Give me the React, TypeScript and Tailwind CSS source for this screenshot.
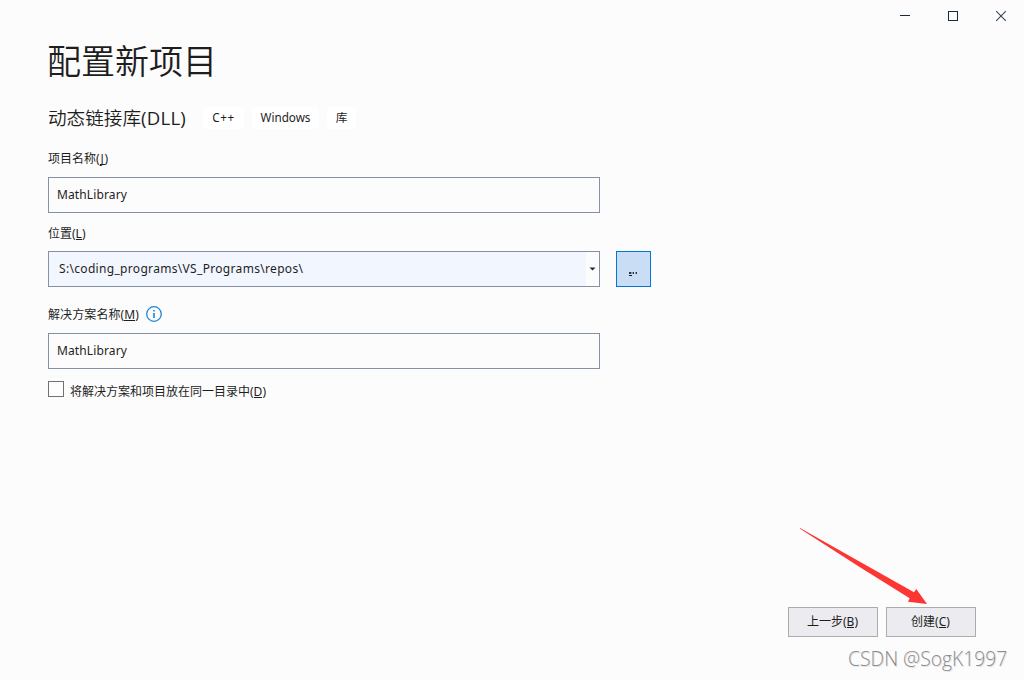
import type { ReactNode } from "react";

function Key({ children }: { children: ReactNode }) {
  return <span className="inline-block h-[13px] border-b border-[#1e1e1e] leading-[13px]">{children}</span>;
}

function Tag({ children, size }: { children: ReactNode; size: string }) {
  return (
    <span className={`flex h-[22px] items-center justify-center rounded-[4px] bg-white text-[11.7px] ${size}`}>
      {children}
    </span>
  );
}

function TitleBar() {
  return (
    <header className="flex h-8 shrink-0 justify-end">
      <div className="flex w-12 items-center justify-center pl-0.5">
        <svg width="12" height="12" viewBox="0 0 12 12" shapeRendering="crispEdges">
          <path d="M1 5h10v1H1z" fill="#1b293e" />
        </svg>
      </div>
      <div className="flex w-12 items-center justify-center pl-0.5">
        <svg width="12" height="12" viewBox="0 0 12 12" shapeRendering="crispEdges">
          <path d="M1.5 1.5h9v9h-9z" fill="none" stroke="#1b293e" />
        </svg>
      </div>
      <div className="flex w-12 items-center justify-center pl-0.5">
        <svg width="12" height="12" viewBox="0 0 12 12">
          <path d="M1.2 1.2l9.6 9.6M10.8 1.2l-9.6 9.6" stroke="#35415a" strokeWidth="1.05" />
        </svg>
      </div>
    </header>
  );
}

export default function App() {
  return (
    <div className="relative flex h-[680px] w-[1024px] flex-col overflow-hidden bg-[#fcfcfc] font-['Noto_Sans','Noto_Sans_CJK_SC',sans-serif] text-[12px] text-[#1e1e1e]">
      <TitleBar />
      <main className="flex flex-1 flex-col pl-12">
        <h1 className="-ml-px -mt-px h-[61px] text-[34px] font-[350] leading-[60px]">配置新项目</h1>
        <div className="mt-[15px] flex h-[22px] items-center">
          <h2 className="w-[155px] whitespace-nowrap text-[18.6px] font-[350] leading-[22px]">
            动态链接库<span className="font-['Open_Sans'] font-normal tracking-[0.25px]">(DLL)</span>
          </h2>
          <div className="flex gap-2">
            <Tag size="w-[41px] tracking-[0.6px]">C++</Tag>
            <Tag size="w-[67px]">Windows</Tag>
            <Tag size="w-[29px]">库</Tag>
          </div>
        </div>

        <label className="mt-[21px] h-[18px] leading-[18px]">项目名称(<span className="inline-block h-[13px] w-[5px] border-b border-[#1e1e1e] text-center font-['Open_Sans'] leading-[13px]">J</span>)</label>
        <div className="mt-[9px] flex h-9 w-[552px] items-center border border-[#8591a5] pl-2 tracking-[0.12px]">MathLibrary</div>

        <label className="mt-[12px] h-[18px] leading-[18px]">位置(<Key>L</Key>)</label>
        <div className="mt-[8px] flex gap-4">
          <div className="flex h-9 w-[552px] border border-[#8591a5]">
            <div className="flex flex-1 items-center bg-[#f2f6ff] pl-[10px] tracking-[0.32px]">S:\coding_programs\VS_Programs\repos\</div>
            <div className="flex w-[13px] items-center justify-center">
              <svg width="7" height="4" viewBox="0 0 7 4">
                <path d="M.5.5h6l-3 3z" fill="#1b293e" />
              </svg>
            </div>
          </div>
          <button className="flex h-9 w-[35px] items-center justify-center border border-[#0078d4] bg-[#c9def5]">
            <svg width="9" height="4" viewBox="0 0 9 4" shapeRendering="crispEdges" className="mt-[9px]">
              <path d="M0 0h2v2H0zM4 0h1v2H4zM7 0h1v2H7z" fill="#2e3340" />
              <path d="M2 0h1v2H2zM3 0h1v2H3zM6 0h1v2H6z" fill="#8c97b0" />
              <path d="M0 3h3v1H0z" fill="#1e1e1e" />
            </svg>
          </button>
        </div>

        <div className="mt-[19px] flex h-[18px] items-center">
          <label className="w-[98px] leading-[18px] tracking-[0.1px]">解决方案名称(<Key>M</Key>)</label>
          <svg width="16" height="16" viewBox="0 0 16 16" className="-mt-0.5">
            <circle cx="8" cy="8" r="7.3" fill="none" stroke="#1c86d8" strokeWidth="1.3" />
            <path d="M7.2 4.1h1.6v1.5H7.2zM7.2 7h1.6v5H7.2z" fill="#1c86d8" />
          </svg>
        </div>
        <div className="mt-[9px] flex h-9 w-[552px] items-center border border-[#8591a5] pl-2 tracking-[0.12px]">MathLibrary</div>

        <div className="mt-[12px] flex">
          <span className="h-4 w-4 border border-[#717171] bg-[#fdfdfd]" />
          <label className="ml-[6px] mt-[2px] h-[18px] leading-[18px]">将解决方案和项目放在同一目录中(<Key>D</Key>)</label>
        </div>
      </main>

      <footer className="mb-[43px] flex shrink-0 justify-end gap-2 pr-12">
        <button className="h-[30px] w-[90px] border border-[#acacac] bg-[#ececf0] pr-px">上一步(<Key>B</Key>)</button>
        <button className="h-[30px] w-[90px] border border-[#acacac] bg-[#ececf0] pr-px">创建(<Key>C</Key>)</button>
      </footer>

      <svg className="absolute left-[796px] top-[524px]" width="136" height="84" viewBox="0 0 136 84">
        <path d="M4 3.9L118 68.3l2.3-3.3L131 80l-19-2.3 1.7-3.5L64 43.3 4 4.8z" fill="#fd3634" />
      </svg>
      <div className="absolute left-[848px] top-[645px] origin-left scale-x-[0.965] whitespace-nowrap font-['Open_Sans'] text-[20px] font-[350] leading-[28px] text-[#8d8d8d] [text-shadow:1px_1px_0_#e4e4e4]">
        CSDN @SogK1997
      </div>
    </div>
  );
}
